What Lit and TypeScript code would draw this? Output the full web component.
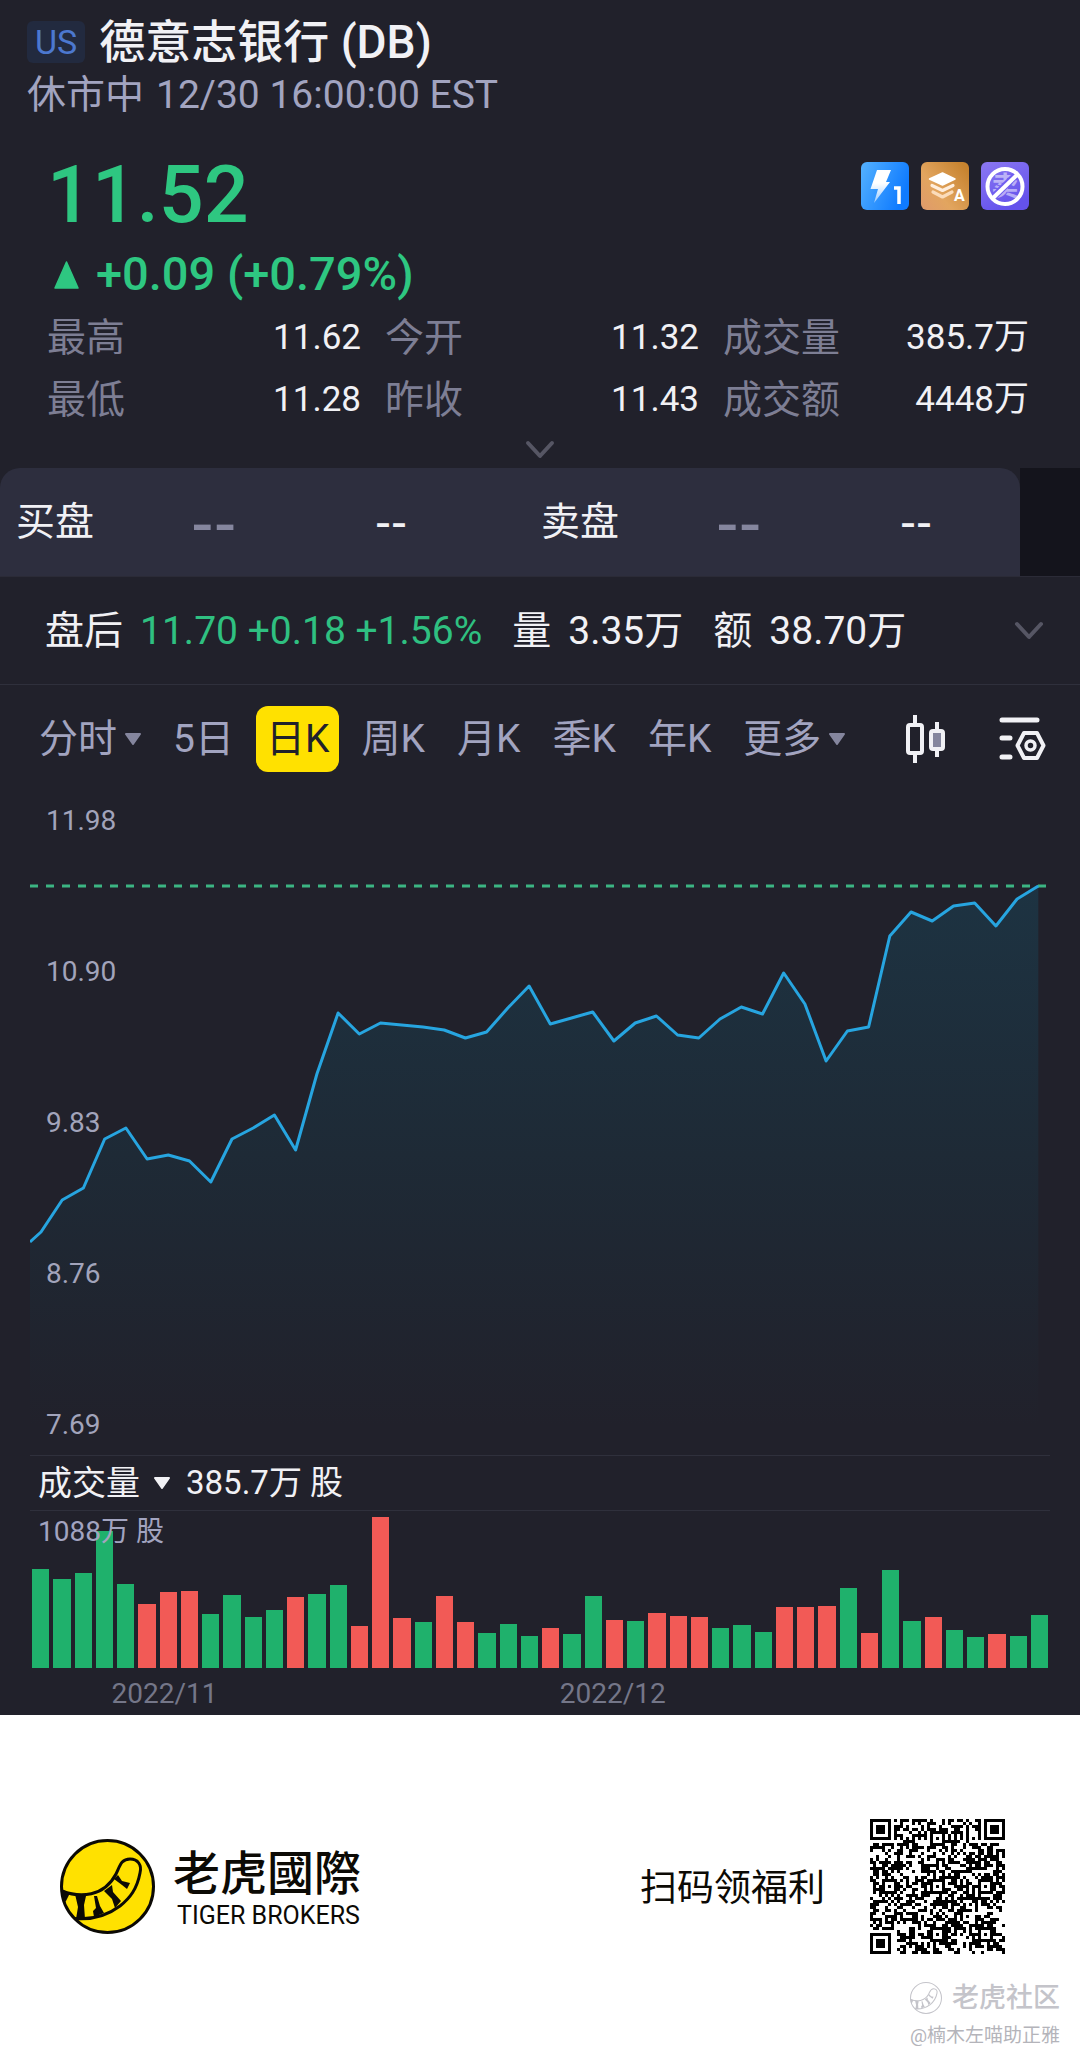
import { LitElement, html, css, svg } from "lit";
import { customElement, property, state } from "lit/decorators.js";
import { classMap } from "lit/directives/class-map.js";

const FONT = css`Roboto, "Noto Sans CJK SC", sans-serif`;

/* Closing line, as heights inside the 1016 x 670 plot. */
const PLOT_W = 1016;
const PLOT_H = 670;
const LINE_STEP = 21.22;
const LINE_START = 11;
const LINE_EDGE = 457;
const CLOSES = [
  447, 415, 403, 354, 343, 374, 370, 376, 397, 354, 343, 330, 365, 289, 228, 249,
  238, 240, 242, 245, 253, 247, 223, 201, 239, 233, 227, 256, 238, 231, 250, 253,
  234, 222, 229, 188, 219, 276, 246, 242, 151, 127, 136, 121, 118, 141, 114, 101,
];

/* Daily volume relative to the axis height, with the direction of the day. */
const VOLUME_MAX = 157;
const VOLUMES: number[] = [
  99, 89, 95, 137, 84, 64, 76, 77, 54, 73, 51, 58, 71, 74, 83, 42,
  151, 50, 46, 72, 46, 35, 44, 32, 40, 34, 72, 48, 47, 55, 52, 51,
  40, 43, 36, 61, 61, 62, 80, 35, 98, 47, 51, 38, 31, 34, 32, 53,
];
const DIRECTIONS = "GGGGGRRRGGGGRGGRRRGRRGGGRGGRGRRRGGGRRRGRGGRGGRGG";

const STATS = [
  ["最高", "11.62"],
  ["今开", "11.32"],
  ["成交量", "385.7万"],
  ["最低", "11.28"],
  ["昨收", "11.43"],
  ["成交额", "4448万"],
];

const TABS = ["分时", "5日", "日K", "周K", "月K", "季K", "年K", "更多"];
const AXIS = ["11.98", "10.90", "9.83", "8.76", "7.69"];

const chevron = html`<svg width="32" height="20" viewBox="0 0 32 20" aria-hidden="true">
  <path d="M4 3 L16 16 L28 3" fill="none" stroke="#565664" stroke-width="4" stroke-linecap="round" stroke-linejoin="round" />
</svg>`;

const caret = html`<svg width="16" height="12" viewBox="0 0 16 12" aria-hidden="true">
  <path d="M1 1 H15 L8 11 Z" fill="currentColor" stroke="currentColor" stroke-width="2" stroke-linejoin="round" />
</svg>`;

@customElement("feature-badges")
class FeatureBadges extends LitElement {
  static styles = css`
    :host {
      display: flex;
      gap: 12px;
    }
    text {
      font-family: ${FONT};
    }
  `;
  render() {
    return html`
      <svg width="48" height="48" viewBox="0 0 48 48" role="img" aria-label="Level 1">
        <defs>
          <linearGradient id="blue" x1="0" y1="0" x2="1" y2="0.4">
            <stop offset="0" stop-color="#55b2ff" />
            <stop offset="1" stop-color="#0f7bff" />
          </linearGradient>
          <linearGradient id="bolt" x1="0" y1="0" x2="0" y2="1">
            <stop offset="0.4" stop-color="#ffffff" />
            <stop offset="1" stop-color="#ffffff" stop-opacity="0.5" />
          </linearGradient>
        </defs>
        <rect width="48" height="48" rx="6" fill="url(#blue)" />
        <path d="M16 8 H30 L25 20 H29 L13 41 L17 27 H9.500 Z" fill="url(#bolt)" />
        <path d="M33 26 H38 V42" fill="none" stroke="#fff" stroke-width="3.500" />
      </svg>
      <svg width="48" height="48" viewBox="0 0 48 48" role="img" aria-label="A">
        <defs>
          <linearGradient id="gold" x1="0" y1="1" x2="1" y2="0.2">
            <stop offset="0" stop-color="#df9a6c" />
            <stop offset="0.4" stop-color="#e2a55f" />
            <stop offset="1" stop-color="#c7832f" />
          </linearGradient>
        </defs>
        <rect width="48" height="48" rx="6" fill="url(#gold)" />
        <path d="M21.500 11 L34 17 L21.500 23 L8.500 17 Z" fill="#fff" stroke="#fff" stroke-width="1.500" stroke-linejoin="round" />
        <path d="M11 23.500 L21.500 28.500 L32 23.500" fill="none" stroke="#ffeedd" stroke-width="3.200" stroke-linecap="round" stroke-linejoin="round" />
        <path d="M12 30 L21.500 35 L31 30" fill="none" stroke="#fbdcbb" stroke-width="3.200" stroke-linecap="round" stroke-linejoin="round" />
        <text x="33" y="39" font-size="16" font-weight="700" fill="#fff">A</text>
      </svg>
      <svg width="48" height="48" viewBox="0 0 48 48" role="img" aria-label="禁止卖空">
        <defs>
          <linearGradient id="violet" x1="0" y1="0" x2="0.500" y2="1">
            <stop offset="0" stop-color="#8b78f2" />
            <stop offset="1" stop-color="#6452ec" />
          </linearGradient>
        </defs>
        <rect width="48" height="48" rx="6" fill="url(#violet)" />
        <text x="24" y="34" font-size="27" font-weight="700" text-anchor="middle" fill="#fff" fill-opacity="0.5">卖</text>
        <path d="M11.500 36 L36 12" stroke="#6f5df0" stroke-width="7" />
        <circle cx="24" cy="24.500" r="17.500" fill="none" stroke="#fff" stroke-width="4" />
        <path d="M11.500 36.500 L36.500 12.500" stroke="#fff" stroke-width="4" />
      </svg>
    `;
  }
}

@customElement("price-chart")
class PriceChart extends LitElement {
  static styles = css`
    :host {
      display: grid;
      font-family: ${FONT};
    }
    .plot,
    .axis {
      grid-area: 1 / 1;
    }
    .plot {
      display: block;
      width: 100%;
      height: auto;
    }
    .axis {
      display: flex;
      flex-direction: column;
      justify-content: space-between;
      list-style: none;
      margin: 0;
      padding: 19px 16px 13px;
      font-size: 28px;
      line-height: 34px;
      color: #a2a4bb;
    }
  `;
  render() {
    const points = [`0,${LINE_EDGE}`, ...CLOSES.map((y, i) => `${(LINE_START + i * LINE_STEP).toFixed(1)},${y}`)];
    const endX = (LINE_START + (CLOSES.length - 1) * LINE_STEP).toFixed(1);
    return html`
      <svg class="plot" viewBox="0 0 ${PLOT_W} ${PLOT_H}" role="img" aria-label="日K">
        <defs>
          <linearGradient id="area" gradientUnits="userSpaceOnUse" x1="0" y1="100" x2="0" y2="640">
            <stop offset="0" stop-color="#1d3342" />
            <stop offset="0.5" stop-color="#1e2a36" />
            <stop offset="1" stop-color="#21212b" />
          </linearGradient>
        </defs>
        ${svg`
          <polygon points="${points.join(" ")} ${endX},640 0,640" fill="url(#area)" />
          <path d="M0 101 H${PLOT_W}" stroke="#3cb583" stroke-width="3" stroke-dasharray="8 8" />
          <polyline points="${points.join(" ")}" fill="none" stroke="#27a5e0" stroke-width="3" stroke-linejoin="round" />
        `}
      </svg>
      <ul class="axis">
        ${AXIS.map((v) => html`<li>${v}</li>`)}
      </ul>
    `;
  }
}

@customElement("volume-chart")
class VolumeChart extends LitElement {
  static styles = css`
    :host {
      display: grid;
      font-family: ${FONT};
    }
    .bars,
    .peak {
      grid-area: 1 / 1;
    }
    .bars {
      display: flex;
      align-items: flex-end;
      gap: 4px;
      height: 157px;
      padding: 0 2px;
    }
    .bar {
      flex: 1;
      background: #1fb16c;
    }
    .down {
      background: #f25a56;
    }
    .peak {
      padding: 4px 8px;
      font-size: 28px;
      line-height: 34px;
      color: #a2a4c0;
    }
  `;
  render() {
    return html`
      <div class="bars">
        ${VOLUMES.map(
          (v, i) => html`<div
            class=${classMap({ bar: true, down: DIRECTIONS[i] === "R" })}
            style="height:${((v / VOLUME_MAX) * 100).toFixed(1)}%"
          ></div>`
        )}
      </div>
      <div class="peak">1088万 股</div>
    `;
  }
}

@customElement("tiger-mark")
class TigerMark extends LitElement {
  @property({ type: Boolean }) muted = false;
  static styles = css`
    :host {
      display: block;
      width: 95px;
      height: 95px;
    }
    :host([muted]) {
      width: 32px;
      height: 32px;
    }
    svg {
      display: block;
      width: 100%;
      height: 100%;
    }
  `;
  render() {
    const ink = this.muted ? "#c4c4ca" : "#0c0a05";
    const fill = this.muted ? "#ffffff" : "#ffe100";
    return html`<svg viewBox="0 0 95 95" aria-hidden="true">
      <circle cx="47.500" cy="47.500" r="46" fill=${fill} stroke=${ink} stroke-width="3" />
      <path
        d="M2 52 C20 59 44 58 56 35 C60 27 61 20 70 20 C78 20 82 26 80 34 C77 50 70 59 60 67 C48 76 32 81 15 79.500"
        fill="none"
        stroke=${ink}
        stroke-width="3"
      />
      <path
        d="M1 50 L10 54 L6 62 L3 64 Z M15 55 L26 57 L24 66 L25 80 L16 80 L18 68 Z M34 57 L37 57 L40 67 L44 74 L34 78 L33 72 L36 69 Z M44 52 L52 46 L53 53 L61 62 L55 69 L52 60 Z M54 40 L58 36 L62 42 L70 44 L67 50 L62 46 Z"
        fill=${ink}
      />
    </svg>`;
  }
}

@customElement("qr-code")
class QrCode extends LitElement {
  static styles = css`
    :host {
      display: block;
      width: 135px;
      height: 135px;
    }
    svg {
      display: block;
      width: 100%;
      height: 100%;
    }
  `;
  private modules(): string {
    const n = 45;
    let seed = 20221230;
    const next = () => {
      seed = (Math.imul(seed, 1664525) + 1013904223) >>> 0;
      return seed / 4294967296;
    };
    const ring = (dx: number, dy: number) => Math.max(Math.abs(dx), Math.abs(dy));
    const finders = [[3, 3], [n - 4, 3], [3, n - 4]];
    const aligns = [[22, 6], [6, 22], [22, 22], [38, 22], [22, 38], [38, 38]];
    let d = "";
    for (let y = 0; y < n; y++) {
      for (let x = 0; x < n; x++) {
        let on = next() < 0.52;
        if (y === 6 || x === 6) on = (x + y) % 2 === 0;
        for (const [cx, cy] of aligns) {
          const r = ring(x - cx, y - cy);
          if (r <= 2) on = r !== 1;
        }
        for (const [cx, cy] of finders) {
          const r = ring(x - cx, y - cy);
          if (r <= 4) on = r === 3 || r <= 1;
        }
        if (on) d += `M${x} ${y}h1v1h-1z`;
      }
    }
    return d;
  }
  render() {
    return html`<svg viewBox="0 0 45 45" role="img" aria-label="二维码" shape-rendering="crispEdges">
      <path d=${this.modules()} fill="#000" />
    </svg>`;
  }
}

@customElement("app-root")
class AppRoot extends LitElement {
  @state() private tab = "日K";

  static styles = css`
    :host {
      display: block;
      background: #21212b;
      color: #f1f1f5;
      font-family: ${FONT};
      font-size: 39px;
      line-height: 44px;
    }
    * {
      box-sizing: border-box;
    }
    button {
      border: 0;
      padding: 0;
      background: none;
      color: inherit;
      font: inherit;
      display: flex;
      align-items: center;
      justify-content: center;
    }
    h1,
    p,
    dl,
    dd {
      margin: 0;
    }
    .head {
      padding: 16px 28px 0 27px;
    }
    .title {
      display: flex;
      align-items: center;
      gap: 14px;
    }
    .market {
      padding: 0 8px;
      border-radius: 6px;
      background: #222a3f;
      color: #4c78cf;
      font-size: 34px;
      line-height: 42px;
    }
    h1 {
      font-size: 46px;
      line-height: 52px;
      font-weight: 500;
    }
    .status {
      display: flex;
      gap: 12px;
      margin-top: 5px;
      color: #a2a4c0;
    }
    .quote {
      padding: 38px 51px 0 47px;
    }
    .price-row {
      display: flex;
      justify-content: space-between;
      align-items: flex-start;
    }
    .price {
      font-size: 79px;
      line-height: 80px;
      font-weight: 500;
      color: #2ec781;
    }
    feature-badges {
      margin-top: 7px;
    }
    .change {
      display: flex;
      align-items: center;
      gap: 16px;
      margin-top: 11px;
      padding-left: 6px;
      font-size: 47px;
      line-height: 56px;
      font-weight: 500;
      color: #2ec781;
    }
    .stats {
      display: grid;
      grid-template-columns: 314fr 314fr 306fr;
      gap: 14px 24px;
      margin-top: 12px;
      line-height: 48px;
    }
    .stat {
      display: flex;
      justify-content: space-between;
    }
    dt {
      color: #7d7e94;
    }
    dd {
      font-size: 35px;
    }
    .expand {
      width: 100%;
      height: 44px;
      padding-top: 8px;
    }
    .book {
      display: flex;
      background: #14141c;
    }
    .book-inner {
      flex: 1;
      background: #21212b;
    }
    .book-card {
      display: grid;
      grid-template-columns: 525fr 479fr;
      height: 108px;
      padding-left: 16px;
      border-radius: 20px 20px 0 0;
      background: #2d2e3e;
    }
    .book-rest {
      width: 60px;
    }
    .side {
      display: grid;
      grid-template-columns: 175px 184px 1fr;
      align-items: center;
    }
    .side-price,
    .side-size {
      font-family: "Liberation Sans", sans-serif;
    }
    .side-price {
      font-size: 68px;
      color: #85869e;
    }
    .side-size {
      font-size: 48px;
    }
    .after {
      display: flex;
      align-items: center;
      justify-content: space-between;
      height: 109px;
      padding: 0 35px 0 45px;
      border-top: 1px solid #2b2b37;
      border-bottom: 1px solid #2f303c;
    }
    .after-items {
      display: flex;
      gap: 30px;
    }
    .pair {
      display: flex;
      gap: 17px;
    }
    .up {
      color: #2fc081;
    }
    .tools {
      display: flex;
      align-items: center;
      justify-content: space-between;
      height: 100px;
      padding: 7px 34px 0 29px;
      color: #a2a4c0;
    }
    .tabs {
      display: flex;
      gap: 12px;
    }
    .tab {
      gap: 8px;
      height: 66px;
      padding: 0 10px;
      border-radius: 12px;
    }
    .tab svg {
      color: #85869e;
    }
    .on {
      background: #ffe100;
      color: #21212b;
    }
    .icons {
      display: flex;
      gap: 52px;
    }
    .chart {
      padding: 0 30px;
    }
    .chart-price {
      padding-right: 4px;
    }
    .volume-head {
      display: flex;
      align-items: center;
      gap: 16px;
      height: 56px;
      padding-left: 8px;
      border-top: 1px solid #2f303c;
      border-bottom: 1px solid #2f303c;
      font-size: 34px;
    }
    .volume-pick {
      gap: 14px;
    }
    .volume-now {
      font-size: 33px;
    }
    .dates {
      display: grid;
      grid-template-columns: 446fr 488fr;
      padding: 9px 0 4px 8%;
      font-size: 28px;
      line-height: 34px;
      color: #747688;
    }
    footer {
      padding: 104px 20px 4px 60px;
      background: #fff;
      color: #0c0a05;
    }
    .brand-row {
      display: flex;
      align-items: center;
      justify-content: space-between;
      padding-right: 55px;
    }
    .brand,
    .invite {
      display: flex;
      align-items: center;
    }
    .brand {
      gap: 18px;
    }
    .brand-text,
    .invite-text {
      padding-top: 4px;
    }
    .brand-name {
      font-size: 47px;
      line-height: 54px;
      font-weight: 500;
    }
    .brand-sub {
      padding-left: 4px;
      font-size: 25px;
      line-height: 30px;
    }
    .invite {
      gap: 45px;
      font-size: 37px;
    }
    .community {
      display: flex;
      flex-direction: column;
      width: fit-content;
      margin: 26px 0 0 auto;
      color: #b4b4ba;
      font-size: 19px;
      line-height: 40px;
    }
    .community-name {
      display: flex;
      align-items: center;
      justify-content: space-between;
      color: #c4c4ca;
      font-size: 27px;
      line-height: 36px;
      font-weight: 500;
    }
  `;

  private side(name: string) {
    return html`<div class="side">
      <span>${name}</span><span class="side-price">--</span><span class="side-size">--</span>
    </div>`;
  }

  render() {
    return html`
      <header class="head">
        <div class="title">
          <span class="market">US</span>
          <h1>德意志银行 (DB)</h1>
        </div>
        <p class="status"><span>休市中</span><span>12/30 16:00:00 EST</span></p>
      </header>

      <section class="quote">
        <div class="price-row">
          <div class="price">11.52</div>
          <feature-badges></feature-badges>
        </div>
        <div class="change">
          <svg width="27" height="30" viewBox="0 0 27 30" aria-hidden="true">
            <path d="M13.500 3 L25 29 H2 Z" fill="currentColor" stroke="currentColor" stroke-width="1.500" stroke-linejoin="round" />
          </svg>
          <span>+0.09 (+0.79%)</span>
        </div>
        <dl class="stats">
          ${STATS.map(([k, v]) => html`<div class="stat"><dt>${k}</dt><dd>${v}</dd></div>`)}
        </dl>
      </section>
      <button class="expand" aria-label="展开">${chevron}</button>

      <section class="book">
        <div class="book-inner">
          <div class="book-card">${this.side("买盘")}${this.side("卖盘")}</div>
        </div>
        <div class="book-rest"></div>
      </section>

      <section class="after">
        <div class="after-items">
          <div class="pair"><span>盘后</span><span class="up">11.70 +0.18 +1.56%</span></div>
          <div class="pair"><span>量</span><span>3.35万</span></div>
          <div class="pair"><span>额</span><span>38.70万</span></div>
        </div>
        <button aria-label="展开盘后">${chevron}</button>
      </section>

      <nav class="tools">
        <div class="tabs">
          ${TABS.map(
            (t) => html`<button
              class=${classMap({ tab: true, on: t === this.tab })}
              @click=${() => (this.tab = t)}
            >${t}${t === "分时" || t === "更多" ? caret : ""}</button>`
          )}
        </div>
        <div class="icons">
          <button aria-label="图表类型">
            <svg width="42" height="50" viewBox="0 0 42 50" aria-hidden="true" fill="none" stroke="#f1f1f5">
              <path d="M10 1 V11 M10 39 V49 M32 8 V17 M32 34 V43" stroke-width="4" />
              <rect x="3" y="11" width="14" height="28" rx="2" stroke-width="4" />
              <rect x="26" y="17" width="12" height="18" rx="2" fill="#85869e" stroke-width="4" />
            </svg>
          </button>
          <button aria-label="图表设置">
            <svg width="47" height="46" viewBox="0 0 47 46" aria-hidden="true" fill="none" stroke="#f1f1f5" stroke-linecap="round" stroke-linejoin="round">
              <path d="M3 4 H38 M3 22 H11 M3 41 H11" stroke-width="5" />
              <path d="M25 17 H38 L44.500 29.500 L38 42 H25 L18.500 29.500 Z" stroke-width="4" />
              <circle cx="31.500" cy="29.500" r="4.500" stroke-width="3.500" />
            </svg>
          </button>
        </div>
      </nav>

      <section class="chart">
        <div class="chart-price"><price-chart></price-chart></div>
        <div class="volume-head">
          <button class="volume-pick">成交量${caret}</button>
          <span class="volume-now">385.7万 股</span>
        </div>
        <volume-chart></volume-chart>
        <div class="dates"><span>2022/11</span><span>2022/12</span></div>
      </section>

      <footer>
        <div class="brand-row">
          <div class="brand">
            <tiger-mark></tiger-mark>
            <div class="brand-text">
              <div class="brand-name">老虎國際</div>
              <div class="brand-sub">TIGER BROKERS</div>
            </div>
          </div>
          <div class="invite"><span class="invite-text">扫码领福利</span><qr-code></qr-code></div>
        </div>
        <div class="community">
          <div class="community-name"><tiger-mark muted></tiger-mark><span>老虎社区</span></div>
          <span>@楠木左喵助正雅</span>
        </div>
      </footer>
    `;
  }
}
